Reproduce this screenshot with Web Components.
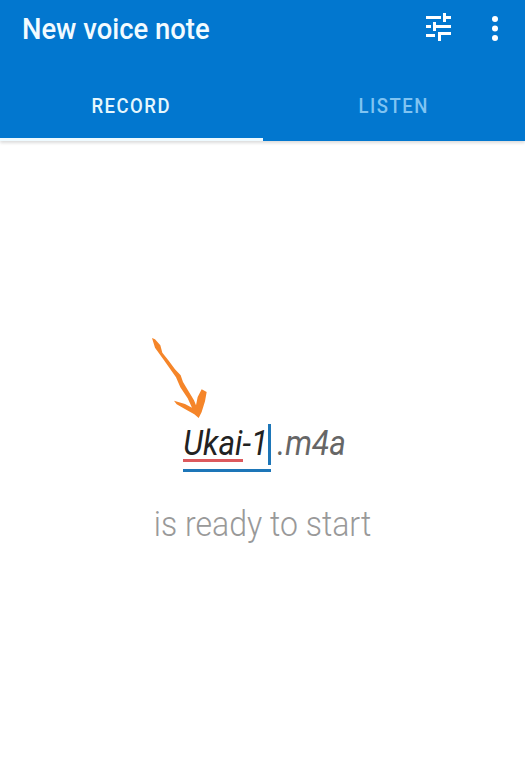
<!DOCTYPE html>
<html>
<head>
<meta charset="utf-8">
<title>New voice note</title>
<style>
  html, body { margin: 0; height: 100%; background: #fff; }
  body { font-family: Roboto, "Liberation Sans", sans-serif; }
</style>
</head>
<body>
<voice-app>
  <app-bar slot="bar" title="New voice note">
    <tab-item slot="tabs" active>RECORD</tab-item>
    <tab-item slot="tabs">LISTEN</tab-item>
  </app-bar>
  <record-panel name="Ukai-1" ext=".m4a" status="is ready to start"></record-panel>
</voice-app>

<script>
class VoiceApp extends HTMLElement {
  constructor() {
    super();
    this.attachShadow({ mode: 'open' });
    this.shadowRoot.innerHTML = `
      <style>
        :host { display: flex; flex-direction: column; width: 525px; height: 765px; overflow: hidden; background: #fff; }
      </style>
      <slot name="bar"></slot>
      <slot></slot>
    `;
  }
}

class AppBar extends HTMLElement {
  constructor() {
    super();
    this.attachShadow({ mode: 'open' });
  }

  connectedCallback() {
    this.shadowRoot.innerHTML = `
      <style>
        :host { display: block; background: #0277cf; box-shadow: 0 2px 3px rgba(0, 0, 0, 0.14); position: relative; z-index: 1; }
        .top { display: flex; align-items: center; height: 56px; padding: 0 26px 0 22px; }
        .title { flex: 1; margin-top: 2px; font-size: 29px; font-weight: 500; color: #f2fbff; transform: scaleX(0.945); transform-origin: left; }
        .icon { display: block; fill: #fff; }
        .sliders { margin-right: 40px; }
        .tabs { display: flex; height: 85px; }
        ::slotted(tab-item) { flex: 1; }
      </style>
      <div class="top">
        <div class="title">${this.getAttribute('title')}</div>
        <svg class="icon sliders" width="25" height="30" viewBox="0 0 25 30">
          <path d="M0 3h15v3H0zM17 0h3v9h-3zM20 3h5v3h-5zM0 12h5v3H0zM7 9h3v9H7zM10 12h15v3H10zM0 21h9v3H0zM12 19h13v3H15v6h-3z"/>
        </svg>
        <svg class="icon" width="8" height="26" viewBox="0 0 8 26">
          <circle cx="4" cy="4" r="3"/><circle cx="4" cy="13.500" r="3"/><circle cx="4" cy="23" r="3"/>
        </svg>
      </div>
      <div class="tabs"><slot name="tabs"></slot></div>
    `;
  }
}

class TabItem extends HTMLElement {
  constructor() {
    super();
    this.attachShadow({ mode: 'open' });
    this.shadowRoot.innerHTML = `
      <style>
        :host { display: flex; align-items: center; justify-content: center; box-sizing: border-box; padding-top: 18px; border-bottom: 3px solid transparent; color: #80c4f2; font-size: 18.5px; font-weight: 500; letter-spacing: 1.5px; }
        :host([active]) { color: #e6f7fd; border-bottom-color: #eefaff; }
        span { display: inline-block; transform: scaleY(1.12); }
      </style>
      <span><slot></slot></span>
    `;
  }
}

class RecordPanel extends HTMLElement {
  constructor() {
    super();
    this.attachShadow({ mode: 'open' });
  }

  connectedCallback() {
    this.shadowRoot.innerHTML = `
      <style>
        :host { display: flex; flex-direction: column; align-items: center; flex: 1; padding-top: 283px; position: relative; }
        .file { display: flex; padding-left: 4px; font-size: 31.5px; font-style: italic; line-height: 40px; color: #666; }
        .name { position: relative; color: #222; border-bottom: 3px solid #1d76b8; padding-right: 3px; padding-bottom: 5px; }
        .name .squiggle { position: absolute; left: 0; width: 60px; bottom: 7px; height: 3px; background: #dc5a5e; }
        .name .caret { position: absolute; right: 0; top: 0; bottom: 4px; width: 3px; background: #1d76b8; }
        .ext { margin-left: 6px; }
        .tall { display: inline-block; transform: scaleY(1.14); }
        .status { margin-top: 33px; font-size: 32px; font-weight: 300; color: #999; transform: scaleY(1.1); }
        .arrow { position: absolute; left: 145px; top: 191px; }
      </style>
      <div class="file">
        <span class="name"><span class="tall">${this.getAttribute('name')}</span><i class="squiggle"></i><i class="caret"></i></span>
        <span class="ext tall">${this.getAttribute('ext')}</span>
      </div>
      <div class="status">${this.getAttribute('status')}</div>
      <svg class="arrow" width="70" height="92" viewBox="0 0 210 276">
        <path fill="#f58529" d="M21 18 L30 22 L46 40 L52 62 L70 85 L90 112 L107 130 L114 150 L127 172 L147 205 L153 220 L158 195 L170 172 L185 180 L180 208 L170 240 L161 258 L148 247 L125 234 L95 217 L87 206 L120 216 L141 227 L128 199 L106 166 L93 136 L56 83 L30 47 Z"/>
      </svg>
    `;
  }
}

customElements.define('voice-app', VoiceApp);
customElements.define('app-bar', AppBar);
customElements.define('tab-item', TabItem);
customElements.define('record-panel', RecordPanel);
</script>
</body>
</html>
